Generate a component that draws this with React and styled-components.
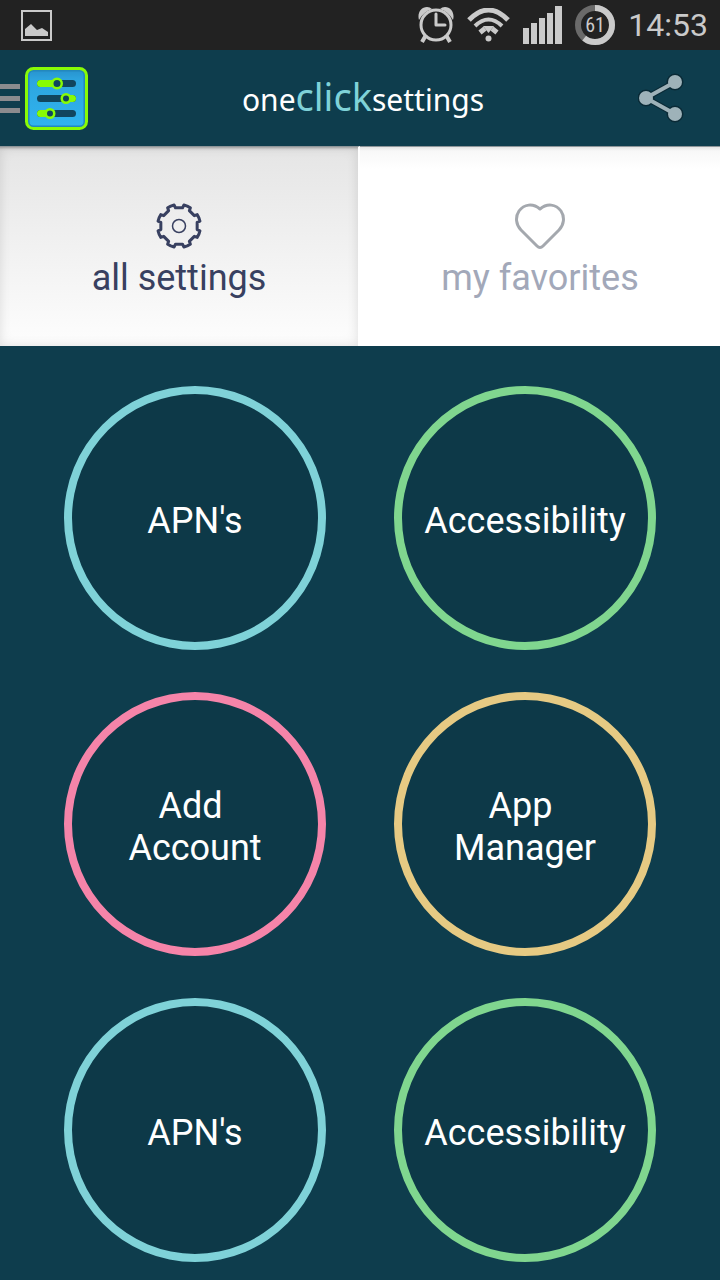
import React from "react";
import styled, { createGlobalStyle } from "styled-components";

const GlobalStyle = createGlobalStyle`
  * {
    box-sizing: border-box;
  }
  body {
    margin: 0;
    background: #0e3d4d;
    font-family: Roboto, "Liberation Sans", sans-serif;
  }
  svg {
    display: block;
    flex-shrink: 0;
  }
`;

const StatusBar = styled.div`
  display: flex;
  align-items: center;
  justify-content: space-between;
  height: 50px;
  padding: 0 12px 0 21px;
  background: #222222;
  color: #cacaca;
`;

const StatusIcons = styled.div`
  display: flex;
  align-items: center;
  gap: 13px;
`;

const Clock = styled.time`
  font-size: 32px;
  line-height: 50px;
`;

const Header = styled.header`
  display: flex;
  align-items: center;
  justify-content: space-between;
  height: 96px;
  padding-right: 36px;
  background: #0e3d4d;
`;

const IconButton = styled.button`
  display: flex;
  align-items: center;
  gap: 5px;
  padding: 0;
  border: 0;
  background: none;
  cursor: pointer;
`;

const MenuBars = styled.span`
  width: 20px;
  height: 29px;
  border-top: 5px solid #8b8b8e;
  border-bottom: 5px solid #8b8b8e;
  padding: 7px 0;
  background: #8b8b8e content-box;
`;

const Logo = styled.h1`
  margin: 0;
  color: #ffffff;
  font-family: "Noto Sans", sans-serif;
  font-size: 30px;
  font-weight: 400;
  line-height: 48px;
  span {
    color: #7fd2d8;
    font-size: 38px;
  }
`;

const Tabs = styled.nav`
  display: grid;
  grid-template-columns: 1fr 1fr;
  background: #ffffff;
`;

const Tab = styled.button`
  display: flex;
  flex-direction: column;
  align-items: center;
  gap: 8px;
  height: 200px;
  padding: 56px 0 0;
  border: 0;
  border-top: 1px solid #8d9599;
  border-right: ${(props) => (props.$active ? "2px solid #ffffff" : "0")};
  background: ${(props) =>
    props.$active
      ? "linear-gradient(#e5e5e5, #fdfdfd)"
      : "linear-gradient(#e4e4e4, #f8f8f8 4px, #ffffff 22px)"};
  background-clip: padding-box;
  box-shadow: ${(props) =>
    props.$active
      ? "inset 0 0 12px rgba(0, 0, 0, 0.12), inset 0 4px 3px -3px rgba(0, 0, 0, 0.3)"
      : "none"};
  color: ${(props) => (props.$active ? "#384060" : "#a2a8b9")};
  font-family: inherit;
  font-size: 36px;
  line-height: 42px;
  cursor: pointer;
`;

const Grid = styled.main`
  display: grid;
  grid-template-columns: 1fr 1fr;
  justify-items: center;
  row-gap: 42px;
  padding: 40px 30px 18px;
`;

const Circle = styled.button`
  display: flex;
  align-items: center;
  justify-content: center;
  width: 262px;
  height: 264px;
  padding: 6px 0 0;
  border: 8px solid ${(props) => props.$color};
  border-radius: 50%;
  background: #0d3948;
  color: #ffffff;
  font-family: inherit;
  font-size: 36px;
  line-height: 42px;
  text-align: center;
  white-space: pre;
  cursor: pointer;
`;

const settings = [
  { label: "APN's", color: "#7fd2d8" },
  { label: "Accessibility", color: "#80d68f" },
  { label: "Add \nAccount", color: "#f584a9" },
  { label: "App \nManager", color: "#e6ca83" },
  { label: "APN's", color: "#7fd2d8" },
  { label: "Accessibility", color: "#80d68f" },
];

function PictureIcon() {
  return (
    <svg width="31" height="31" viewBox="0 0 31 31">
      <rect x="1" y="1" width="29" height="29" fill="none" stroke="#cacaca" strokeWidth="2" />
      <path d="M4 26V19L10 14L16 20L21 18L27 22V26Z" fill="#cacaca" />
    </svg>
  );
}

function AlarmIcon() {
  return (
    <svg width="36" height="36" viewBox="0 0 36 36" fill="none" stroke="#cacaca">
      <path d="M8 28L4 35M28 28L32 35" strokeWidth="4" />
      <path
        d="M1 13C-1 6 3 0 9 0Q12 0 14 2Q5 5 1 13ZM35 13C37 6 33 0 27 0Q24 0 22 2Q31 5 35 13Z"
        fill="#cacaca"
        stroke="none"
      />
      <circle cx="18" cy="18" r="15" strokeWidth="3" />
      <path d="M18 7V18H27" strokeWidth="3" strokeLinecap="round" strokeLinejoin="round" />
    </svg>
  );
}

function WifiIcon() {
  return (
    <svg width="43" height="34" viewBox="0 0 43 34" fill="none" stroke="#cacaca">
      <path d="M2 12Q21.500 -8 41 12" strokeWidth="5" />
      <path d="M8 18Q21.500 5 35 18" strokeWidth="4" />
      <path d="M16 18H27L21.500 25Z" fill="#cacaca" stroke="none" />
      <path d="M13 24.500L18 20.500M30 24.500L25 20.500" strokeWidth="5" />
      <circle cx="21.500" cy="30.500" r="3" fill="#cacaca" stroke="none" />
    </svg>
  );
}

function SignalIcon() {
  return (
    <svg width="39" height="38" viewBox="0 0 39 38" fill="#cacaca">
      <rect x="0" y="22" width="6" height="16" />
      <rect x="8" y="17" width="6" height="21" />
      <rect x="16" y="12" width="6" height="26" />
      <rect x="24" y="7" width="6" height="31" />
      <rect x="32" y="0" width="7" height="38" />
    </svg>
  );
}

function BatteryIcon({ level }) {
  return (
    <svg width="40" height="40" viewBox="0 0 40 40">
      <circle cx="20" cy="20" r="17" fill="none" stroke="#6a6a6a" strokeWidth="6" />
      <circle
        cx="20"
        cy="20"
        r="17"
        fill="none"
        stroke="#cacaca"
        strokeWidth="6"
        pathLength="100"
        strokeDasharray={`${level} 100`}
        transform="rotate(-90 20 20)"
      />
      <text
        x="20"
        y="27"
        fill="#cacaca"
        fontFamily="'Roboto Condensed', 'Liberation Sans Narrow', Roboto, sans-serif"
        fontSize="20"
        textAnchor="middle"
      >
        {level}
      </text>
    </svg>
  );
}

function AppIcon() {
  return (
    <svg width="63" height="63" viewBox="0 0 63 63">
      <defs>
        <linearGradient id="appIconFill" x1="0" y1="0" x2="0" y2="1">
          <stop offset="0" stopColor="#2790cb" />
          <stop offset="0.2" stopColor="#2da5e0" />
          <stop offset="1" stopColor="#30b4f0" />
        </linearGradient>
      </defs>
      <rect x="1.500" y="1.500" width="60" height="60" rx="7" fill="url(#appIconFill)" />
      <rect x="3.500" y="3.500" width="56" height="56" rx="5" fill="none" stroke="#2388bd" strokeWidth="2" />
      <rect x="1.500" y="1.500" width="60" height="60" rx="7" fill="none" stroke="#88fb06" strokeWidth="3" />
      <g strokeWidth="7" strokeLinecap="round">
        <path d="M15.500 16.500H47.500M15.500 31.500H47.500M15.500 46.500H47.500" stroke="#11455e" />
        <path d="M15.500 16.500H32M42 31.500H47.500M15.500 46.500H24" stroke="#88fb06" />
      </g>
      <g fill="#11455e" stroke="#88fb06" strokeWidth="2.500">
        <circle cx="32" cy="16.500" r="4.750" />
        <circle cx="41" cy="31.500" r="4.250" />
        <circle cx="25" cy="46.500" r="4.250" />
      </g>
    </svg>
  );
}

function ShareIcon() {
  return (
    <svg width="46" height="50" viewBox="0 0 46 50">
      <g fill="#0a2a36" stroke="#0a2a36">
        <path d="M37 9L8 25L37 41" fill="none" strokeWidth="6" />
        <circle cx="8" cy="25" r="8" />
        <circle cx="37" cy="9" r="8" />
        <circle cx="37" cy="41" r="8" />
      </g>
      <g fill="#9eb2b9" stroke="#9eb2b9">
        <path d="M37 9L8 25L37 41" fill="none" strokeWidth="4" />
        <circle cx="8" cy="25" r="7" stroke="none" />
        <circle cx="37" cy="9" r="7" stroke="none" />
        <circle cx="37" cy="41" r="7" stroke="none" />
      </g>
    </svg>
  );
}

// eight teeth, with a notch at the top, bottom and both sides
function gearPath() {
  const points = [];
  for (let i = 0; i < 8; i++) {
    [
      [-11, 18.5],
      [11, 18.5],
      [13, 21.5],
      [22.5, 21.5],
      [32, 21.5],
    ].forEach(([offset, radius]) => {
      const angle = ((i * 45 + offset) * Math.PI) / 180;
      points.push(`${23 + radius * Math.sin(angle)} ${23 - radius * Math.cos(angle)}`);
    });
  }
  return `M${points.join("L")}Z`;
}

function GearIcon() {
  return (
    <svg width="46" height="46" viewBox="0 0 46 46" fill="none" stroke="#384060">
      <path d={gearPath()} strokeWidth="3" strokeLinejoin="round" />
      <circle cx="23" cy="23" r="6.500" strokeWidth="1.500" />
    </svg>
  );
}

function HeartIcon() {
  return (
    <svg width="50" height="46" viewBox="0 0 50 46" fill="none" stroke="#a4a8ae">
      <path
        d="M25 6C18 0 9 1 4 8C0 14 1 22 6 27L22 43Q25 46 28 43L44 27C49 22 50 14 46 8C41 1 32 0 25 6Z"
        strokeWidth="3"
        strokeLinejoin="round"
      />
    </svg>
  );
}

function App() {
  return (
    <>
      <GlobalStyle />
      <StatusBar>
        <PictureIcon />
        <StatusIcons>
          <AlarmIcon />
          <WifiIcon />
          <SignalIcon />
          <BatteryIcon level={61} />
          <Clock>14:53</Clock>
        </StatusIcons>
      </StatusBar>
      <Header>
        <IconButton aria-label="Menu">
          <MenuBars />
          <AppIcon />
        </IconButton>
        <Logo>
          one<span>click</span>settings
        </Logo>
        <IconButton aria-label="Share">
          <ShareIcon />
        </IconButton>
      </Header>
      <Tabs>
        <Tab $active>
          <GearIcon />
          all settings
        </Tab>
        <Tab>
          <HeartIcon />
          my favorites
        </Tab>
      </Tabs>
      <Grid>
        {settings.map((item, index) => (
          <Circle key={index} $color={item.color}>
            {item.label}
          </Circle>
        ))}
      </Grid>
    </>
  );
}

export default App;
